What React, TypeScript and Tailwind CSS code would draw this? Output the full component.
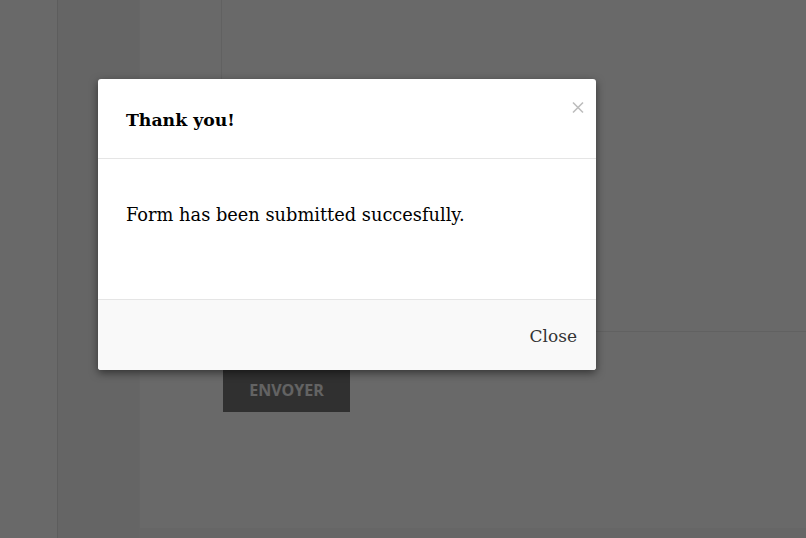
import React from "react";

const App = () => {
  return (
    <div className="relative h-[538px] w-[806px] overflow-hidden bg-white font-['Open_Sans',sans-serif]">
      {/* page under the overlay */}
      <div className="flex h-full">
        <aside className="w-[58px] border-r border-[#e2e2e2] bg-white" />
        <div className="w-[82px] border-r border-[#f8f8f8] bg-[#f4f4f4]" />
        <section className="flex flex-1 flex-col">
          <div className="flex h-[332px] border-b border-[#ececec]">
            <div className="w-[82px] border-r border-[#ececec]" />
            <div className="flex-1" />
          </div>
          <div className="flex-1 pl-[83px] pt-[36px]">
            <button className="h-[44px] w-[127px] bg-[#767676] text-[16px] font-bold text-[#f0f0f0]">
              ENVOYER
            </button>
          </div>
          <div className="h-[10px] bg-[#f8f8f8]" />
        </section>
      </div>

      {/* overlay + modal */}
      <div className="absolute inset-0 bg-black/[0.59]">
        <div className="absolute left-[98px] top-[79px] w-[498px] overflow-hidden rounded-[3px] bg-white shadow-[0_3px_9px_rgba(0,0,0,0.5)] font-['DejaVu_Serif',serif] text-black">
          <div className="relative h-[80px] border-b border-[#e5e5e5] pl-7 pt-[28px]">
            <h4 className="text-[17.3px] font-bold leading-[26px]">Thank you!</h4>
            <button className="absolute right-[12px] top-[22px] text-[#bdbdbd]">
              <svg width="12" height="13" viewBox="0 0 12 13" fill="none" stroke="currentColor" strokeWidth="1.6">
                <path d="M1 1.5l10 10M11 1.5l-10 10" />
              </svg>
            </button>
          </div>
          <div className="h-[140px] pl-7 pt-[43px]">
            <p className="text-[17.8px] leading-[26px]">Form has been submitted succesfully.</p>
          </div>
          <div className="flex h-[71px] items-center justify-end border-t border-[#e5e5e5] bg-[#f9f9f9] pr-[19px] pt-[4px]">
            <button className="text-[17px] text-[#333]">Close</button>
          </div>
        </div>
      </div>
    </div>
  );
};

export default App;
